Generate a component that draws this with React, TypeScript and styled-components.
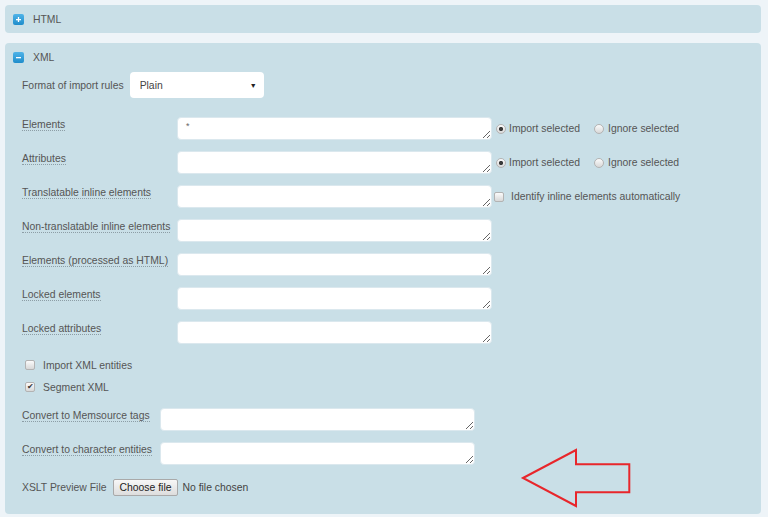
import React from "react";
import styled, { createGlobalStyle } from "styled-components";

const GlobalStyle = createGlobalStyle`
  html, body { margin: 0; padding: 0; }
  body {
    background: #eef4f8;
    font-family: "Liberation Sans", Arial, sans-serif;
    font-size: 10.4px;
    color: #555;
  }
`;

const Page = styled.div`
  display: flex;
  flex-direction: column;
  gap: 10px;
  padding: 5px 7px 3px 5px;
`;

const Panel = styled.section`
  position: relative;
  background: #c9dfe7;
  border-radius: 4px;
`;

const PanelHeader = styled.div`
  height: 28px;
  display: flex;
  align-items: center;
  gap: 9px;
  padding-left: 8px;
  color: #555;
`;

const Body = styled.div`
  display: flex;
  flex-direction: column;
  padding: 1px 17px 18px;
`;

const FormatRow = styled.div`
  display: flex;
  align-items: center;
  gap: 6px;
`;

const SelectWrap = styled.div`
  position: relative;
  width: 134px;
  height: 26px;
`;

const Select = styled.select`
  appearance: none;
  width: 100%;
  height: 100%;
  border: none;
  border-radius: 4px;
  background: #fff;
  padding: 0 0 0 10px;
  font: inherit;
  color: #444;
  outline: none;
`;

const Caret = styled.span`
  position: absolute;
  right: 7px;
  top: 50%;
  transform: translateY(-50%);
  font-size: 7px;
  color: #222;
  pointer-events: none;
`;

const FieldGrid = styled.div<{ $label: number; $mt: number }>`
  display: grid;
  grid-template-columns: ${(p) => p.$label}px 315px auto;
  row-gap: 11px;
  margin-top: ${(p) => p.$mt}px;
  align-items: start;
`;

const LabelCell = styled.div`
  padding-top: 2px;
  line-height: 12px;
`;

const DottedLabel = styled.span`
  border-bottom: 1px dotted #8d9ea6;
  color: #555;
`;

const TextArea = styled.textarea`
  display: block;
  box-sizing: border-box;
  width: 315px;
  height: 23px;
  margin: 0;
  border: 1px solid #dbe8ee;
  border-radius: 4px;
  background: #fff;
  padding: 3px 8px;
  font-family: "Liberation Sans", Arial, sans-serif;
  font-size: 9px;
  color: #666;
  outline: none;
`;

const ExtraCell = styled.div`
  align-self: center;
`;

const Extras = styled.div<{ $pl: number }>`
  display: flex;
  align-items: center;
  gap: 14px;
  padding-left: ${(p) => p.$pl}px;
`;

const Option = styled.label<{ $gap: number }>`
  display: flex;
  align-items: center;
  gap: ${(p) => p.$gap}px;
  color: #555;
`;

const RadioMark = styled.span<{ $checked?: boolean }>`
  box-sizing: border-box;
  width: 10px;
  height: 10px;
  border-radius: 50%;
  border: 1px solid #b3b3b3;
  background: ${(p) =>
    p.$checked
      ? "radial-gradient(circle, #3a3a3a 0 1.8px, transparent 2.4px), linear-gradient(#fbfbfb, #d8d8d8)"
      : "linear-gradient(#fbfbfb, #d8d8d8)"};
`;

const CheckMark = styled.span`
  box-sizing: border-box;
  width: 10px;
  height: 10px;
  border-radius: 2px;
  border: 1px solid #b3b3b3;
  background: linear-gradient(#fbfbfb, #d8d8d8);
  display: flex;
  align-items: center;
  justify-content: center;
  font-size: 8px;
  line-height: 1;
  color: #333;
`;

const CheckGroup = styled.div`
  margin-top: 10px;
  display: flex;
  flex-direction: column;
`;

const CheckRow = styled.label`
  height: 22px;
  display: flex;
  align-items: center;
  gap: 8px;
  padding-left: 3px;
  color: #555;
`;

const FileRow = styled.div`
  margin-top: 14px;
  display: flex;
  align-items: center;
  height: 17px;
`;

const FileLabel = styled.span`
  margin-right: 6px;
  color: #555;
`;

const FileButton = styled.button`
  box-sizing: border-box;
  height: 17px;
  padding: 0 6px;
  border: 1px solid #a9a9a9;
  border-radius: 2px;
  background: linear-gradient(#f7f7f7, #dddddd);
  font: inherit;
  color: #222;
  margin-right: 4px;
`;

const FileStatus = styled.span`
  color: #444;
`;

const ArrowSvg = styled.svg`
  position: absolute;
  left: 515px;
  top: 404px;
  overflow: visible;
`;

const ToggleIcon = ({ open }: { open: boolean }) => (
  <svg width="11" height="11" viewBox="0 0 11 11">
    <defs>
      <linearGradient id={open ? "gMinus" : "gPlus"} x1="0" y1="0" x2="0" y2="1">
        <stop offset="0" stopColor="#4fb3e8" />
        <stop offset="1" stopColor="#1f8dcb" />
      </linearGradient>
    </defs>
    <rect x="0" y="0" width="11" height="11" rx="2" fill={`url(#${open ? "gMinus" : "gPlus"})`} />
    <rect x="3" y="5" width="5" height="1.3" fill="#fff" />
    {!open && <rect x="4.85" y="3" width="1.3" height="5" fill="#fff" />}
  </svg>
);

type Field = { label: string; value?: string; extra?: React.ReactNode };

const RadioPair = () => (
  <Extras $pl={4}>
    <Option $gap={3}>
      <RadioMark $checked />
      Import selected
    </Option>
    <Option $gap={4}>
      <RadioMark />
      Ignore selected
    </Option>
  </Extras>
);

const fields: Field[] = [
  { label: "Elements", value: "*", extra: <RadioPair /> },
  { label: "Attributes", extra: <RadioPair /> },
  {
    label: "Translatable inline elements",
    extra: (
      <Extras $pl={2}>
        <Option $gap={7}>
          <CheckMark />
          Identify inline elements automatically
        </Option>
      </Extras>
    ),
  },
  { label: "Non-translatable inline elements" },
  { label: "Elements (processed as HTML)" },
  { label: "Locked elements" },
  { label: "Locked attributes" },
];

const convertFields: Field[] = [
  { label: "Convert to Memsource tags" },
  { label: "Convert to character entities" },
];

const renderFields = (list: Field[]) =>
  list.map((f) => (
    <React.Fragment key={f.label}>
      <LabelCell>
        <DottedLabel>{f.label}</DottedLabel>
      </LabelCell>
      <TextArea defaultValue={f.value ?? ""} />
      <ExtraCell>{f.extra ?? null}</ExtraCell>
    </React.Fragment>
  ));

export default function App() {
  return (
    <>
      <GlobalStyle />
      <Page>
        <Panel>
          <PanelHeader>
            <ToggleIcon open={false} />
            HTML
          </PanelHeader>
        </Panel>
        <Panel>
          <PanelHeader>
            <ToggleIcon open />
            XML
          </PanelHeader>
          <Body>
            <FormatRow>
              <span>Format of import rules</span>
              <SelectWrap>
                <Select defaultValue="Plain">
                  <option>Plain</option>
                </Select>
                <Caret>▼</Caret>
              </SelectWrap>
            </FormatRow>
            <FieldGrid $label={155} $mt={19}>
              {renderFields(fields)}
            </FieldGrid>
            <CheckGroup>
              <CheckRow>
                <CheckMark />
                Import XML entities
              </CheckRow>
              <CheckRow>
                <CheckMark>✔</CheckMark>
                Segment XML
              </CheckRow>
            </CheckGroup>
            <FieldGrid $label={138} $mt={10}>
              {renderFields(convertFields)}
            </FieldGrid>
            <FileRow>
              <FileLabel>XSLT Preview File</FileLabel>
              <FileButton>Choose file</FileButton>
              <FileStatus>No file chosen</FileStatus>
            </FileRow>
          </Body>
          <ArrowSvg width="112" height="62" viewBox="0 0 112 62">
            <polygon
              points="3,31 56,3 56,17.3 109.3,17.3 109.3,45.3 56,45.3 56,59"
              fill="none"
              stroke="#e8262b"
              strokeWidth="2"
            />
          </ArrowSvg>
        </Panel>
      </Page>
    </>
  );
}
